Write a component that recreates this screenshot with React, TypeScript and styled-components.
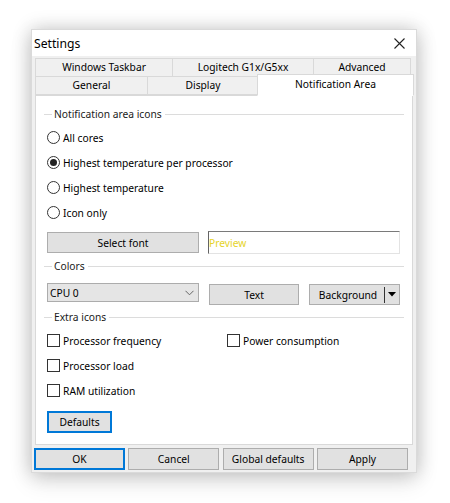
import React from "react";
import styled, { createGlobalStyle } from "styled-components";

const GlobalStyle = createGlobalStyle`
  html, body { margin: 0; padding: 0; background: #ffffff; }
  body { font-family: "Noto Sans", "Open Sans", sans-serif; font-size: 10.25px; color: #000; }
  * { box-sizing: border-box; }
`;

const Page = styled.div`
  width: 450px;
  height: 503px;
  padding: 29px 0 0 31px;
`;

const Window = styled.div`
  width: 386px;
  height: 444px;
  background: #f0f0f0;
  border: 1px solid rgba(0, 0, 0, 0.09);
  box-shadow: 0 0 18px rgba(0, 0, 0, 0.2), 0 8px 22px rgba(0, 0, 0, 0.12);
  display: flex;
  flex-direction: column;
`;

const TitleBar = styled.div`
  height: 26px;
  background: #ffffff;
  display: flex;
  align-items: center;
  justify-content: space-between;
  padding: 0 11px 0 2px;
  flex: none;
`;

const Title = styled.div`
  font-size: 12.2px;
  color: #000;
  padding-top: 1px;
`;

const Body = styled.div`
  padding: 2px 3px 0 3px;
  display: flex;
  flex-direction: column;
`;

const TabRow = styled.div`
  display: flex;
  height: 19px;
  & + & { margin-top: -1px; }
`;

const Tab = styled.div<{ $w: number; $active?: boolean }>`
  width: ${(p) => p.$w}px;
  height: ${(p) => (p.$active ? 22 : 19)}px;
  margin: ${(p) => (p.$active ? "-2px -2px -1px -2px" : "0")};
  margin-left: ${(p) => (p.$active ? "-2px" : "-1px")};
  &:first-child { margin-left: 0; }
  border: 1px solid #d9d9d9;
  border-bottom-color: ${(p) => (p.$active ? "#ffffff" : "#d9d9d9")};
  background: ${(p) => (p.$active ? "#ffffff" : "#f0f0f0")};
  position: relative;
  z-index: ${(p) => (p.$active ? 2 : 1)};
  display: flex;
  align-items: ${(p) => (p.$active ? "flex-start" : "center")};
  padding-top: ${(p) => (p.$active ? "2px" : "0")};
  justify-content: center;
  line-height: 15px;
  white-space: nowrap;
`;

const Panel = styled.div`
  width: 378px;
  height: 350px;
  background: #ffffff;
  border: 1px solid #d9d9d9;
  padding: 8px 8px 0 8px;
  display: flex;
  flex-direction: column;
  position: relative;
  z-index: 1;
`;

const GroupHeader = styled.div<{ $mt?: number }>`
  display: flex;
  align-items: center;
  height: 20px;
  margin-top: ${(p) => p.$mt ?? 0}px;
  color: #1a1a1a;
  &::before {
    content: "";
    width: 8px;
    height: 1px;
    background: #dcdcdc;
    margin-right: 2px;
  }
  &::after {
    content: "";
    flex: 1;
    height: 1px;
    background: #dcdcdc;
    margin-left: 3px;
  }
`;

const OptionRow = styled.div`
  height: 25px;
  display: flex;
  align-items: center;
  padding-left: 3px;
  white-space: nowrap;
`;

const RadioCircle = styled.span<{ $checked?: boolean }>`
  width: 13px;
  height: 13px;
  border-radius: 50%;
  border: 1px solid #333333;
  background: #ffffff;
  display: inline-flex;
  align-items: center;
  justify-content: center;
  margin-right: 3px;
  flex: none;
  &::after {
    content: "";
    width: 7px;
    height: 7px;
    border-radius: 50%;
    background: ${(p) => (p.$checked ? "#222222" : "transparent")};
  }
`;

const CheckBox = styled.span`
  width: 13px;
  height: 13px;
  border: 1px solid #333333;
  background: #ffffff;
  margin-right: 3px;
  flex: none;
`;

const RadioList = styled.div`
  display: flex;
  flex-direction: column;
  margin-top: 1px;
`;

const ControlRow = styled.div<{ $mt: number; $h: number }>`
  display: flex;
  align-items: flex-start;
  margin-top: ${(p) => p.$mt}px;
  height: ${(p) => p.$h}px;
  padding-left: 3px;
`;

const Button = styled.button<{ $w: number; $h?: number; $default?: boolean; $mt?: number; $ml?: number }>`
  width: ${(p) => p.$w}px;
  height: ${(p) => p.$h ?? 21}px;
  margin-top: ${(p) => p.$mt ?? 0}px;
  margin-left: ${(p) => p.$ml ?? 0}px;
  background: #e1e1e1;
  border: ${(p) => (p.$default ? "2px solid #0078d7" : "1px solid #adadad")};
  font-family: inherit;
  font-size: 10.25px;
  color: #000;
  padding: 0;
  display: flex;
  align-items: center;
  justify-content: center;
  flex: none;
`;

const PreviewField = styled.div`
  width: 192px;
  height: 23px;
  margin-left: 9px;
  background: #ffffff;
  border-style: solid;
  border-width: 1px;
  border-color: #7a7a7a #e3e3e3 #e3e3e3 #646464;
  color: #e6d42a;
  display: flex;
  align-items: center;
`;

const Select = styled.div`
  width: 152px;
  height: 19px;
  background: #e5e5e5;
  border: 1px solid #acacac;
  display: flex;
  align-items: center;
  justify-content: space-between;
  padding: 0 4px 0 2px;
  flex: none;
`;

const SplitButton = styled.div`
  width: 91px;
  height: 21px;
  margin-top: 1px;
  margin-left: 10px;
  background: #e1e1e1;
  border: 1px solid #adadad;
  display: flex;
  align-items: center;
  flex: none;
`;

const SplitLabel = styled.span`
  flex: 1;
  text-align: center;
  padding-left: 2px;
`;

const SplitDivider = styled.span`
  width: 1px;
  height: 16px;
  background: #333333;
`;

const SplitArrow = styled.span`
  width: 14px;
  display: flex;
  justify-content: center;
  align-items: center;
`;

const CheckGrid = styled.div`
  display: grid;
  grid-template-columns: 180px 1fr;
  grid-auto-rows: 25px;
  margin-top: 1px;
`;

const FooterRow = styled.div`
  display: flex;
  gap: 3.33px;
  margin-top: 3px;
  margin-left: -1px;
`;

const DefaultsWrap = styled.div`
  padding-left: 3px;
  margin-top: 8px;
`;

const CloseIcon = () => (
  <svg width="11" height="11" viewBox="0 0 11 11">
    <path d="M0.5 0.5 L10.5 10.5 M10.5 0.5 L0.5 10.5" stroke="#222" strokeWidth="1.1" fill="none" />
  </svg>
);

const Chevron = () => (
  <svg width="9" height="6" viewBox="0 0 9 6">
    <path d="M0.5 0.8 L4.5 4.8 L8.5 0.8" stroke="#666" strokeWidth="1" fill="none" />
  </svg>
);

const TriangleDown = () => (
  <svg width="8" height="5" viewBox="0 0 8 5">
    <path d="M0 0 L8 0 L4 4.5 Z" fill="#000" />
  </svg>
);

export default function App() {
  const radios = [
    { label: "All cores", checked: false },
    { label: "Highest temperature per processor", checked: true },
    { label: "Highest temperature", checked: false },
    { label: "Icon only", checked: false },
  ];
  return (
    <>
      <GlobalStyle />
      <Page>
        <Window>
          <TitleBar>
            <Title>Settings</Title>
            <CloseIcon />
          </TitleBar>
          <Body>
            <TabRow>
              <Tab $w={138}>Windows Taskbar</Tab>
              <Tab $w={142}>Logitech G1x/G5xx</Tab>
              <Tab $w={98}>Advanced</Tab>
            </TabRow>
            <TabRow>
              <Tab $w={113}>General</Tab>
              <Tab $w={112}>Display</Tab>
              <Tab $w={157} $active>Notification Area</Tab>
            </TabRow>
            <Panel>
              <GroupHeader>Notification area icons</GroupHeader>
              <RadioList>
                {radios.map((r) => (
                  <OptionRow key={r.label}>
                    <RadioCircle $checked={r.checked} />
                    {r.label}
                  </OptionRow>
                ))}
              </RadioList>
              <ControlRow $mt={6} $h={23}>
                <Button $w={152} $mt={1}>Select font</Button>
                <PreviewField>Preview</PreviewField>
              </ControlRow>
              <GroupHeader $mt={2}>Colors</GroupHeader>
              <ControlRow $mt={7} $h={22}>
                <Select>
                  <span>CPU 0</span>
                  <Chevron />
                </Select>
                <Button $w={90} $mt={1} $ml={10}>Text</Button>
                <SplitButton>
                  <SplitLabel>Background</SplitLabel>
                  <SplitDivider />
                  <SplitArrow>
                    <TriangleDown />
                  </SplitArrow>
                </SplitButton>
              </ControlRow>
              <GroupHeader $mt={2}>Extra icons</GroupHeader>
              <CheckGrid>
                <OptionRow>
                  <CheckBox />
                  Processor frequency
                </OptionRow>
                <OptionRow>
                  <CheckBox />
                  Power consumption
                </OptionRow>
                <OptionRow>
                  <CheckBox />
                  Processor load
                </OptionRow>
                <span />
                <OptionRow>
                  <CheckBox />
                  RAM utilization
                </OptionRow>
              </CheckGrid>
              <DefaultsWrap>
                <Button $w={65} $h={22} $default>Defaults</Button>
              </DefaultsWrap>
            </Panel>
            <FooterRow>
              <Button $w={91} $h={22} $default>OK</Button>
              <Button $w={91} $h={22}>Cancel</Button>
              <Button $w={91} $h={22}>Global defaults</Button>
              <Button $w={91} $h={22}>Apply</Button>
            </FooterRow>
          </Body>
        </Window>
      </Page>
    </>
  );
}
